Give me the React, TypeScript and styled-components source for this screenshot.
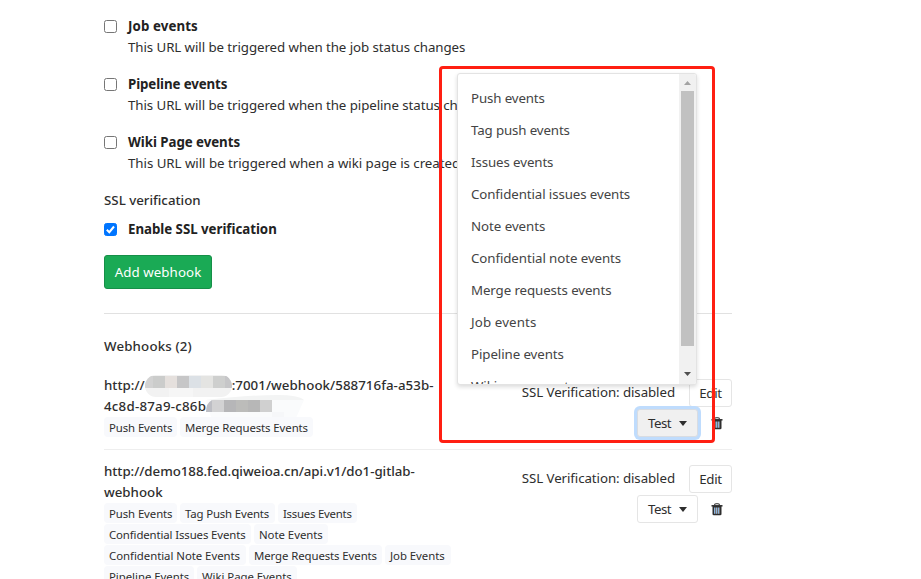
import React from "react";
import styled, { createGlobalStyle } from "styled-components";

const Global = createGlobalStyle`
  * { box-sizing: border-box; }
  html, body { margin: 0; padding: 0; background: #fff; overflow: hidden; }
  button { font: inherit; margin: 0; }
`;

const Page = styled.main`
  position: relative;
  width: 921px;
  height: 579px;
  overflow: hidden;
  padding: 16px 189px 0 104px;
  background: #fff;
  color: #2e2e2e;
  font-family: "Noto Sans", sans-serif;
  font-size: 13.3px;
  line-height: 21px;
`;

const Fit = styled.span<{ $ls?: number }>`
  white-space: nowrap;
  letter-spacing: ${(p) => p.$ls ?? 0}px;
`;

const Option = styled.label`
  display: grid;
  grid-template-columns: 24px 1fr;
  margin-bottom: 16px;
`;

const Check = styled.span<{ $on?: boolean }>`
  display: flex;
  width: 13px;
  height: 13px;
  margin-top: 4px;
  border: 1px solid ${(p) => (p.$on ? "#0075ff" : "#767676")};
  border-radius: 2.5px;
  background: ${(p) => (p.$on ? "#0075ff" : "#fff")};
`;

const OptionTitle = styled.strong`
  display: block;
  height: 21px;
  font-weight: 700;
  color: #222;
`;

const OptionText = styled.span`
  display: block;
  height: 21px;
`;

const SectionLabel = styled.div<{ $gap: number }>`
  height: 21px;
  font-weight: 500;
  margin-bottom: ${(p) => p.$gap}px;
`;

const AddButton = styled.button`
  display: flex;
  align-items: center;
  justify-content: center;
  width: 108px;
  height: 34px;
  margin-top: -1px;
  padding: 0;
  color: #fff;
  background: #1aaa55;
  border: 1px solid #168f48;
  border-radius: 3px;
`;

const Divider = styled.hr`
  height: 1px;
  margin: 24px 0 22px;
  border: 0;
  background: #e1e1e1;
`;

const HookRow = styled.section`
  display: grid;
  grid-template-columns: 366px 1fr;
  padding-bottom: 11px;
  margin-bottom: 11px;
  border-bottom: 1px solid #eee;
`;

const Url = styled.div`
  font-weight: 500;
  height: 21px;
  display: flex;
  white-space: nowrap;
`;

const Badges = styled.div`
  display: flex;
  flex-wrap: wrap;
  column-gap: 3px;
  position: relative;
`;

const Badge = styled.span<{ $w: number; $ls?: number }>`
  width: ${(p) => p.$w}px;
  height: 20px;
  margin-bottom: 1px;
  padding-left: 5px;
  border-radius: 4px;
  background: #f8f9fc;
  font-size: 11.4px;
  white-space: nowrap;
  letter-spacing: ${(p) => p.$ls ?? -0.04}px;
`;

const Actions = styled.div`
  display: flex;
  flex-direction: column;
  gap: 2px;
  padding-top: 4px;
`;

const ActionLine = styled.div<{ $pad?: number }>`
  display: flex;
  justify-content: flex-end;
  align-items: center;
  height: 28px;
  padding-right: ${(p) => p.$pad ?? 0}px;
`;

const SslText = styled.span`
  margin-right: 14px;
  margin-top: -2px;
`;

const SmallButton = styled.button<{ $w: number; $focus?: boolean }>`
  display: flex;
  align-items: center;
  justify-content: center;
  gap: 8px;
  width: ${(p) => p.$w}px;
  height: 28px;
  padding: 0;
  color: #2e2e2e;
  background: ${(p) => (p.$focus ? "#f0f0f0" : "#fff")};
  border: 1px solid ${(p) => (p.$focus ? "#d8dce2" : "#e5e5e5")};
  border-radius: 3px;
  box-shadow: ${(p) => (p.$focus ? "0 0 0 3px #bfdcfd" : "none")};
`;

const Caret = styled.span`
  border: 4px solid transparent;
  border-top: 5px solid #2e2e2e;
  border-bottom: 0;
`;

const Dropdown = styled.div`
  position: relative;
  margin-right: 13px;
`;

const Menu = styled.div`
  position: absolute;
  z-index: 2;
  right: 1px;
  bottom: 52px;
  display: flex;
  width: 240px;
  height: 312px;
  overflow: hidden;
  background: #fff;
  border: 1px solid #e3e3e3;
  border-radius: 3px;
  box-shadow: 0 2px 4px rgba(0, 0, 0, 0.14);
`;

const MenuList = styled.ul`
  flex: 1;
  list-style: none;
  margin: 0;
  padding: 8px 0 0 13px;
  color: #444;
`;

const MenuItem = styled.li`
  height: 32px;
  line-height: 32px;
`;

const Scrollbar = styled.div`
  display: flex;
  flex-direction: column;
  align-items: center;
  width: 17px;
  background: #f1f1f1;
  padding-top: 7px;
`;

const Thumb = styled.div`
  flex: none;
  width: 13px;
  height: 255px;
  margin: 6px 0 26px;
  background: #c1c1c1;
`;

const Highlight = styled.div`
  position: absolute;
  z-index: 3;
  left: 439px;
  top: 66px;
  width: 276px;
  height: 377px;
  border: 3px solid #ff1f12;
  border-radius: 4px;
`;

const Mosaic = styled.svg`
  display: block;
  flex: none;
  overflow: visible;
`;

const Tick = () => (
  <svg width="11" height="11" viewBox="0 0 11 11" fill="none">
    <path d="M1.8 5.8 4.3 8.2 9 2.5" stroke="#fff" strokeWidth="2" />
  </svg>
);

const Trash = () => (
  <svg width="12" height="13" viewBox="0 0 12 13" fill="none">
    <path d="M3.5 2.2Q3.5.8 5 .8h2q1.5 0 1.5 1.4" stroke="#2e2e2e" strokeWidth="1.1" />
    <path d="M.5 2.8h11" stroke="#2e2e2e" strokeWidth="1.5" />
    <path d="M1.5 3v8q0 1.3 1.3 1.3h6.4q1.3 0 1.3-1.3V3z" fill="#2e2e2e" />
    <path d="M3.5 4.5v6.3M5.5 4.5v6.3M7.5 4.5v6.3" stroke="#8bb4e0" strokeWidth="1" />
    <path d="M4.5 4.5v6.3M6.5 4.5v6.3M8.5 4.5v6.3" stroke="#77726f" strokeWidth="1" />
  </svg>
);

const options: [string, number, string, number][] = [
  ["Job events", 0.1, "This URL will be triggered when the job status changes", -0.075],
  ["Pipeline events", -0.1, "This URL will be triggered when the pipeline status changes", -0.075],
  ["Wiki Page events", -0.05, "This URL will be triggered when a wiki page is created/updated", -0.04],
];

const menuItems: [string, number][] = [
  ["Push events", -0.13],
  ["Tag push events", -0.13],
  ["Issues events", -0.1],
  ["Confidential issues events", -0.1],
  ["Note events", -0.04],
  ["Confidential note events", -0.08],
  ["Merge requests events", -0.1],
  ["Job events", 0.12],
  ["Pipeline events", -0.08],
  ["Wiki page events", -0.08],
];

const hostCells: [number, number, string][] = [
  [0, 12, "#d2d2d2"], [12, 12, "#cbcccb"], [24, 12, "#e5e0dd"], [36, 12, "#c6c6c7"],
  [48, 12, "#dce1e6"], [60, 12, "#e4e4e2"], [72, 12, "#cecfce"], [84, 4, "#c6c6c8"],
];

const pathCells: [number, number, string][] = [
  [0, 6, "#bdbec4"], [6, 12, "#d2d2d3"], [18, 12, "#b6b6b8"], [30, 12, "#bcbcba"],
  [42, 12, "#b7b7b7"], [54, 12, "#d0d0d0"],
];

const HostMosaic = () => (
  <Mosaic width="87" height="21">
    <clipPath id="hostShape"><rect width="87" height="22" rx="11" /></clipPath>
    <g clipPath="url(#hostShape)">
      <rect width="87" height="23" fill="#f2f2f2" />
      <rect x="24" y="13" width="24" height="10" fill="#f6f6f6" />
      {hostCells.map(([x, w, c]) => <rect key={x} x={x - 4} y="1" width={w} height="12" fill={c} />)}
      <rect x="80" y="1" width="7" height="12" fill="#c6c6c8" />
    </g>
  </Mosaic>
);

const PathMosaic = () => (
  <Mosaic width="98" height="21">
    <path d="M0 4Q40-1 72-1 92-1 98 4z" fill="#f3f4f4" />
    <path d="M0 4h98l-8 18q-40 6-85-1z" fill="#fafbfc" />
    <clipPath id="pathShape"><path d="M6 4h60v12H0q0-9 6-12z" /></clipPath>
    <g clipPath="url(#pathShape)">
      {pathCells.map(([x, w, c]) => <rect key={x} x={x} y="4" width={w} height="12" fill={c} />)}
    </g>
    <rect x="66" y="16" width="12" height="8" fill="#f6f7f9" />
  </Mosaic>
);

const SslStatus = () => <SslText><Fit $ls={-0.08}>SSL Verification: disabled</Fit></SslText>;

const EditButton = () => <SmallButton $w={43}><Fit $ls={-0.3}>Edit</Fit></SmallButton>;

const TestButton = ({ focus }: { focus?: boolean }) => (
  <SmallButton $w={61} $focus={focus}><Fit $ls={-0.5}>Test</Fit><Caret /></SmallButton>
);

export default function App() {
  return (
    <>
      <Global />
      <Page>
        {options.map(([title, titleLs, text, textLs]) => (
          <Option key={title}>
            <Check />
            <div>
              <OptionTitle><Fit $ls={titleLs}>{title}</Fit></OptionTitle>
              <OptionText><Fit $ls={textLs}>{text}</Fit></OptionText>
            </div>
          </Option>
        ))}
        <SectionLabel $gap={8}><Fit>SSL verification</Fit></SectionLabel>
        <Option>
          <Check $on><Tick /></Check>
          <OptionTitle><Fit $ls={-0.03}>Enable SSL verification</Fit></OptionTitle>
        </Option>
        <AddButton><Fit $ls={0.08}>Add webhook</Fit></AddButton>
        <Divider />
        <SectionLabel $gap={18}><Fit $ls={0.16}>Webhooks (2)</Fit></SectionLabel>
        <HookRow>
          <div>
            <Url>
              <Fit>http://</Fit>
              <HostMosaic />
              <Fit $ls={0.05}>:7001/webhook/588716fa-a53b-</Fit>
            </Url>
            <Url><Fit $ls={0.23}>4c8d-87a9-c86b</Fit><PathMosaic /></Url>
            <Badges>
              <Badge $w={73} $ls={-0.1}>Push Events</Badge>
              <Badge $w={133} $ls={-0.09}>Merge Requests Events</Badge>
            </Badges>
          </div>
          <Actions>
            <ActionLine>
              <SslStatus />
              <EditButton />
            </ActionLine>
            <ActionLine $pad={9}>
              <Dropdown>
                <TestButton focus />
                <Menu>
                  <MenuList>
                    {menuItems.map(([name, ls]) => <MenuItem key={name}><Fit $ls={ls}>{name}</Fit></MenuItem>)}
                  </MenuList>
                  <Scrollbar>
                    <svg width="7" height="4"><path d="M0 4 3.5 0 7 4z" fill="#a3a3a3" /></svg>
                    <Thumb />
                    <svg width="7" height="4"><path d="M0 0 3.5 4 7 0z" fill="#505050" /></svg>
                  </Scrollbar>
                </Menu>
              </Dropdown>
              <Trash />
            </ActionLine>
          </Actions>
        </HookRow>
        <HookRow>
          <div>
            <Url><Fit $ls={-0.04}>http://demo188.fed.qiweioa.cn/api.v1/do1-gitlab-</Fit></Url>
            <Url><Fit>webhook</Fit></Url>
            <Badges>
              <Badge $w={73} $ls={-0.1}>Push Events</Badge>
              <Badge $w={95} $ls={-0.15}>Tag Push Events</Badge>
              <Badge $w={79} $ls={-0.24}>Issues Events</Badge>
              <Badge $w={147} $ls={-0.12}>Confidential Issues Events</Badge>
              <Badge $w={74}>Note Events</Badge>
              <Badge $w={142}>Confidential Note Events</Badge>
              <Badge $w={133} $ls={-0.09}>Merge Requests Events</Badge>
              <Badge $w={66}>Job Events</Badge>
              <Badge $w={90}>Pipeline Events</Badge>
              <Badge $w={100}>Wiki Page Events</Badge>
            </Badges>
          </div>
          <Actions>
            <ActionLine>
              <SslStatus />
              <EditButton />
            </ActionLine>
            <ActionLine $pad={9}>
              <Dropdown><TestButton /></Dropdown>
              <Trash />
            </ActionLine>
          </Actions>
        </HookRow>
        <Highlight />
      </Page>
    </>
  );
}
